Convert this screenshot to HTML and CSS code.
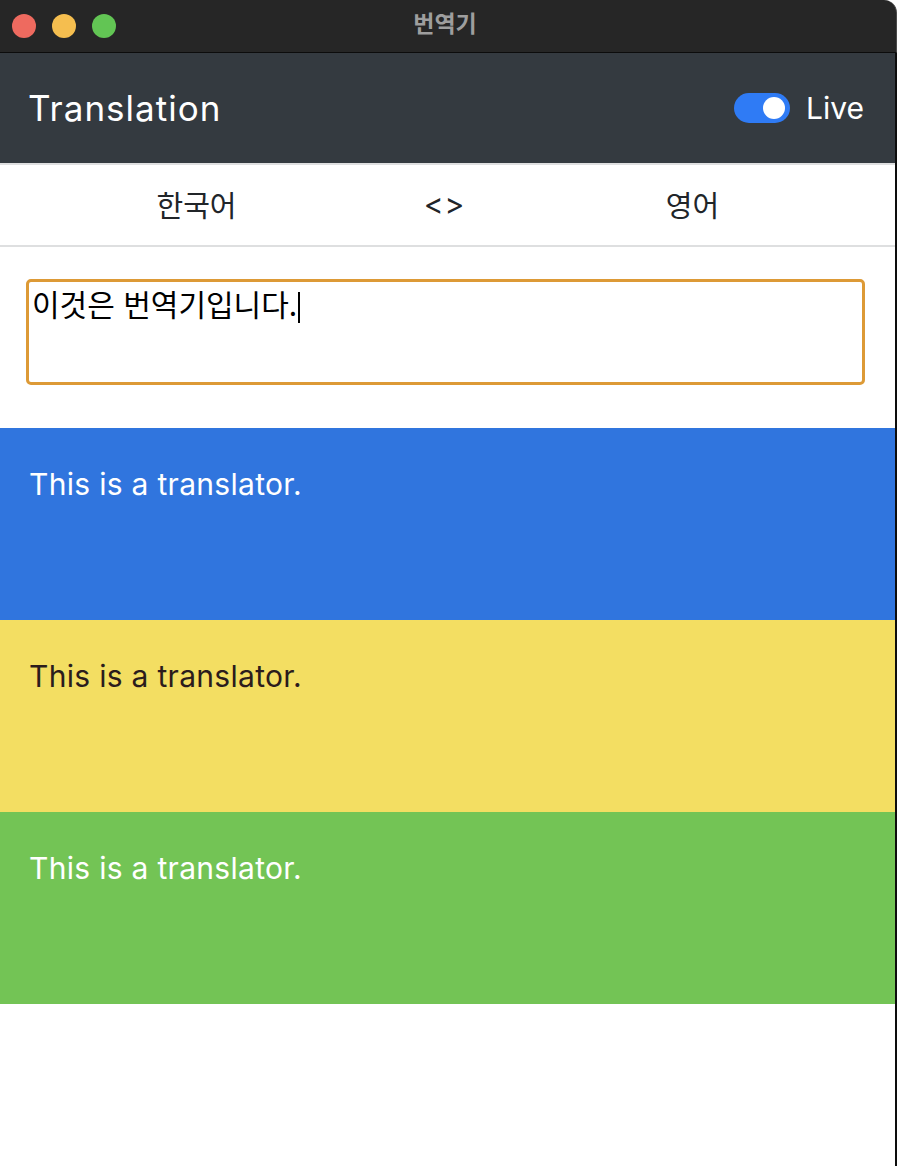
FILE: index.html
```html
<!DOCTYPE html>
<html lang="ko">
<head>
<meta charset="utf-8">
<title>번역기</title>
<link rel="stylesheet" href="styles.css">
</head>
<body>
<div class="window">
  <div class="titlebar">
    <div class="lights">
      <span class="light red"></span>
      <span class="light yellow"></span>
      <span class="light green"></span>
    </div>
    <div class="title">번역기</div>
  </div>
  <div class="app">
    <header class="navbar">
      <div class="brand">Translation</div>
      <div class="live">
        <span class="switch"><span class="knob"></span></span>
        <span class="live-label">Live</span>
      </div>
    </header>
    <nav class="langbar">
      <div class="lang">한국어</div>
      <div class="lang swap">&lt;&gt;</div>
      <div class="lang">영어</div>
    </nav>
    <section class="input-wrap">
      <div class="input">이것은 번역기입니다.<span class="caret"></span></div>
    </section>
    <section class="result blue">This is a translator.</section>
    <section class="result yellow">This is a translator.</section>
    <section class="result green">This is a translator.</section>
  </div>
</div>
</body>
</html>
```
FILE: styles.css
```css
* { box-sizing: border-box; }
html, body {
  margin: 0;
  padding: 0;
  background: #ffffff;
}
body {
  width: 898px;
  height: 1166px;
  overflow: hidden;
  font-family: Inter, "Noto Sans CJK KR", sans-serif;
}
.window {
  width: 897px;
  height: 1166px;
  display: flex;
  flex-direction: column;
}
.titlebar {
  height: 53px;
  background: #262626;
  border-bottom: 1px solid #0c0c0c;
  border-top-right-radius: 13px;
  border-right: 1px solid #4a4a4a;
  display: flex;
  align-items: center;
  position: relative;
}
.lights {
  display: flex;
  gap: 16px;
  padding-left: 12px;
}
.light {
  width: 24px;
  height: 24px;
  border-radius: 50%;
  display: block;
}
.light.red { background: #ee6a5f; }
.light.yellow { background: #f5be4f; }
.light.green { background: #62c554; }
.title {
  position: absolute;
  left: 0;
  right: 0;
  top: 7px;
  text-align: center;
  font-family: "Noto Sans CJK KR", sans-serif;
  font-weight: 700;
  font-size: 23px;
  line-height: 30px;
  color: #9e9e9e;
  margin-left: -6px;
}
.app {
  flex: 1;
  width: 897px;
  border-right: 2px solid #0d0d0d;
  display: flex;
  flex-direction: column;
}
.navbar {
  height: 112px;
  background: #343a40;
  border-bottom: 2px solid #dedfe0;
  display: flex;
  align-items: center;
  justify-content: space-between;
  padding: 0 31px 0 28px;
}
.brand {
  color: #ffffff;
  font-size: 35px;
  line-height: 40px;
  letter-spacing: 1px;
}
.live {
  display: flex;
  align-items: center;
  gap: 16px;
}
.switch {
  width: 56px;
  height: 30px;
  border-radius: 15px;
  background: #2f7bf5;
  display: flex;
  align-items: center;
  justify-content: flex-end;
  padding-right: 5px;
}
.knob {
  width: 22px;
  height: 22px;
  border-radius: 50%;
  background: #ffffff;
  display: block;
}
.live-label {
  color: #ffffff;
  font-size: 30px;
  line-height: 40px;
}
.langbar {
  height: 82px;
  border-bottom: 2px solid #dedfe0;
  display: grid;
  grid-template-columns: repeat(3, 248px);
  justify-content: center;
  align-items: center;
  padding-right: 6px;
  padding-bottom: 2px;
  color: #212529;
  font-family: "Noto Sans CJK KR", sans-serif;
  font-size: 29px;
}
.lang {
  text-align: center;
}
.swap {
  font-family: Inter, sans-serif;
  font-size: 30px;
  letter-spacing: 1px;
}
.input-wrap {
  height: 181px;
  padding: 32px 30px 0 26px;
}
.input {
  height: 106px;
  border: 3px solid #dd9a36;
  border-radius: 5px;
  padding: 1px 3px;
  font-family: "Noto Sans CJK KR", sans-serif;
  font-size: 30px;
  line-height: 40px;
  color: #000000;
}
.caret {
  display: inline-block;
  width: 1.5px;
  height: 31px;
  background: #000000;
  vertical-align: -7px;
  margin-left: 1px;
}
.result {
  height: 192px;
  padding: 35px 29px;
  font-size: 30px;
  line-height: 42px;
  letter-spacing: 0.3px;
}
.blue { background: #3075de; color: #ffffff; }
.yellow { background: #f3de62; color: #2b1c1c; }
.green { background: #73c455; color: #ffffff; }
```
